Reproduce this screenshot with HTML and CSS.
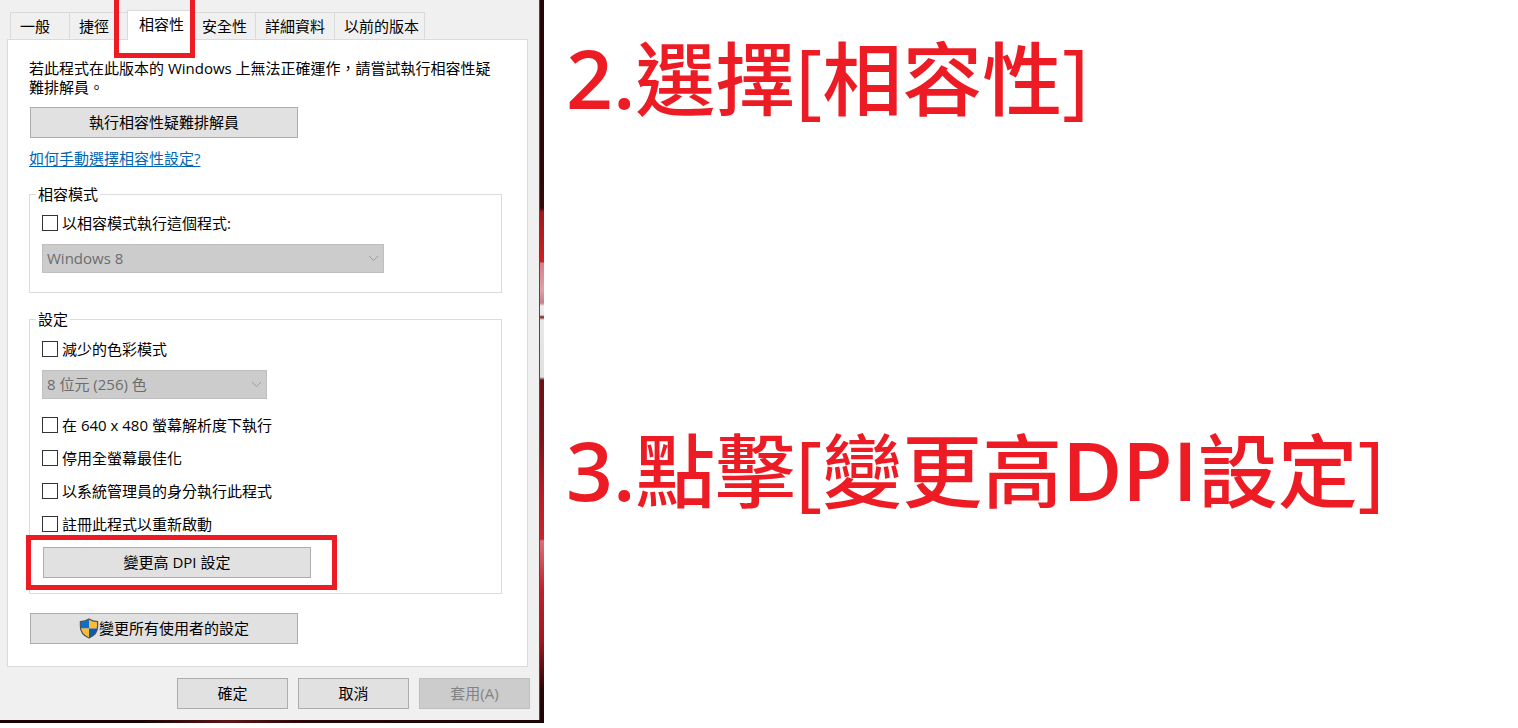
FILE: index.html
```html
<!DOCTYPE html>
<html lang="zh-Hant">
	<head>
		<meta charset="UTF-8">
		<title>相容性</title>
		<link rel="stylesheet" href="styles.css">
	</head>
	<body>
		<div class="wrap">
			<div class="desktop">
				<form class="dialog">
					<div class="tabs" role="tablist">
						<button type="button" role="tab" class="tab">一般</button>
						<button type="button" role="tab" class="tab tab-link">捷徑</button>
						<button type="button" role="tab" class="tab active" aria-selected="true">相容性</button>
						<button type="button" role="tab" class="tab tab-safe">安全性</button>
						<button type="button" role="tab" class="tab">詳細資料</button>
						<button type="button" role="tab" class="tab">以前的版本</button>
					</div>
					<div class="panel">
						<p class="intro">若此程式在此版本的 Windows 上無法正確運作，請嘗試執行相容性疑難排解員。</p>
						<button type="button" class="btn wide">執行相容性疑難排解員</button>
						<a class="help" href="#">如何手動選擇相容性設定?</a>

						<fieldset class="mode">
							<legend>相容模式</legend>
							<label class="check"><input type="checkbox">以相容模式執行這個程式:</label>
							<div class="select os">
								<select disabled aria-label="相容模式"><option>Windows 8</option></select>
								<svg viewBox="0 0 11 7"><path d="M1 1l4.500 4.500L10 1"/></svg>
							</div>
						</fieldset>

						<fieldset class="settings">
							<legend>設定</legend>
							<label class="check"><input type="checkbox">減少的色彩模式</label>
							<div class="select color">
								<select disabled aria-label="色彩模式"><option>8 位元 (256) 色</option></select>
								<svg viewBox="0 0 11 7"><path d="M1 1l4.500 4.500L10 1"/></svg>
							</div>
							<div class="checks">
								<label class="check"><input type="checkbox">在 640 x 480 螢幕解析度下執行</label>
								<label class="check"><input type="checkbox">停用全螢幕最佳化</label>
								<label class="check"><input type="checkbox">以系統管理員的身分執行此程式</label>
								<label class="check"><input type="checkbox">註冊此程式以重新啟動</label>
								<div class="dpi">
									<button type="button" class="btn wide">變更高 DPI 設定</button>
								</div>
							</div>
						</fieldset>

						<button type="button" class="btn wide all-users">
							<svg class="shield" viewBox="0 0 20 22">
								<path fill="#0f6fc6" d="M10 1C7.500 2.800 4.500 3.600 1 3.700V11h9z"/>
								<path fill="#fdbb35" d="M10 1c2.500 1.800 5.500 2.600 9 2.700V11h-9z"/>
								<path fill="#fdbb35" d="M1 11c.5 4.500 4 7.800 9 10V11z"/>
								<path fill="#0d5cab" d="M19 11c-.5 4.500-4 7.800-9 10V11z"/>
								<path fill="none" stroke="#4b5560" stroke-width="1.300" d="M10 1C7.500 2.800 4.500 3.600 1 3.700V9c0 6 3.500 9.800 9 12 5.500-2.200 9-6 9-12V3.700C15.500 3.600 12.500 2.800 10 1z"/>
							</svg>變更所有使用者的設定
						</button>
					</div>
					<div class="footer">
						<button type="button" class="btn">確定</button>
						<button type="button" class="btn">取消</button>
						<button type="button" class="btn" disabled>套用(A)</button>
					</div>
				</form>
			</div>

			<div class="steps">
				<h2><b>2.</b>選擇<span>[</span>相容性<span>]</span></h2>
				<h2><b>3.</b>點擊<span>[</span>變更高<b>DPI</b>設定<span>]</span></h2>
			</div>
		</div>
	</body>
</html>
```
FILE: styles.css
```css
*{
	box-sizing: border-box;
}
body{
	margin: 0;
	background: #fff;
	color: #000;
	font: 15px/19px "Open Sans","Noto Sans CJK TC",sans-serif;
}
button,select,input{
	font: inherit;
	color: inherit;
	margin: 0;
}
.wrap{
	display: flex;
	align-items: flex-start;
}

/* wallpaper shows on the right and bottom edge of the dialog */
.desktop{
	flex: 0 1 544px;
	padding: 0 4px 3px 0;
	background:
		linear-gradient(to right,#1c0405 0%,#1c0405 26%,#5c1518 42%,#2a0607 56%,#1c0405 100%) left bottom/100% 3px no-repeat,
		linear-gradient(#260405 0,#300506 180px,#3a080a 208px,#a0181c 212px,#d0201f 262px,#d97f88 263px,#dfa0a6 290px,#c9808a 303px,#f0eeee 306px,#e8e6e6 315px,#7a1418 317px,#e8e8e8 320px,#dfe2df 377px,#6a1014 380px,#7d1418 440px,#b81c22 490px,#c8242a 539px,#dc7078 541px,#c02028 590px,#a0181e 640px,#2a0506 690px,#1c0405 723px);
}
.dialog{
	padding: 10px 0 11px 7px;
	background: #f0f0f0;
	border-right: 1px solid #5a4648;
}

/* tabs */
.tabs{
	display: flex;
	align-items: flex-end;
	padding-left: 3px;
}
.tab{
	height: 27px;
	padding: 0 9px;
	border: 1px solid #dadada;
	border-bottom: 0;
	border-right: 0;
	background: #f0f0f0;
	white-space: nowrap;
}
.tab:first-child{
	padding-right: 19px;
}
.tab:last-child{
	padding-right: 5px;
	border-right: 1px solid #dadada;
}
.tab-link{
	padding-right: 18px;
}
.tab-safe{
	padding: 0 8px 0 7px;
	border-left: 0;
}
.tab.active{
	position: relative;
	height: 30px;
	margin-bottom: -1px;
	padding: 0 11px 2px;
	background: #fff;
}
.tab.active::after{
	content: "";
	position: absolute;
	top: -11px;
	left: -14px;
	right: 0;
	height: 53px;
	border: 5px solid #ed1c24;
	border-top: 0;
	z-index: 2;
}

.panel{
	margin-right: 11px;
	padding: 19px 25px 22px 21px;
	border: 1px solid #dadada;
	background: #fff;
}
.intro{
	margin: 0 0 10px;
}
.help{
	display: table;
	margin: 11px 0 17px;
	color: #0066b4;
	text-underline-offset: 2px;
}

/* buttons */
.btn{
	width: 111px;
	height: 31px;
	padding: 0;
	border: 1px solid #adadad;
	background: #e1e1e1;
}
.btn.wide{
	width: 268px;
	max-width: 100%;
	margin-left: 1px;
}
.btn:disabled{
	border-color: #bfbfbf;
	background: #ccc;
	color: #838383;
}
.all-users{
	display: flex;
	align-items: center;
	justify-content: center;
	margin-top: 19px;
}
.shield{
	width: 20px;
	height: 21px;
}

/* groups */
fieldset{
	min-width: 0;
	margin: 0;
	padding: 9px 12px 19px;
	border: 1px solid #dcdcdc;
}
legend{
	margin-left: -6px;
	padding: 0 2px;
}
.settings{
	margin-top: 17px;
	padding: 10px 12px 15px;
}
.check{
	display: flex;
	align-items: center;
	gap: 4px;
	height: 20px;
	line-height: 18px;
}
.check input{
	appearance: none;
	width: 16px;
	height: 16px;
	border: 1px solid #333;
	background: #fff;
}
.select{
	position: relative;
	margin-top: 11px;
	color: #6d6d6d;
}
.select select{
	appearance: none;
	display: block;
	width: 100%;
	height: 29px;
	padding: 0 24px 0 4px;
	border: 1px solid #bfbfbf;
	border-radius: 0;
	background: #ccc;
	opacity: 1;
}
.select svg{
	position: absolute;
	right: 5px;
	top: 11px;
	width: 11px;
	height: 7px;
	fill: none;
	stroke: #9c9c9c;
}
.os{
	max-width: 342px;
}
.color{
	max-width: 225px;
}
.checks{
	display: flex;
	flex-direction: column;
	gap: 13px;
	margin-top: 16px;
}
.dpi{
	position: relative;
	align-self: flex-start;
}
.dpi .btn{
	display: block;
}
.dpi::after{
	content: "";
	position: absolute;
	inset: -12px -26px -12px -16px;
	border: 5px solid #ed1c24;
	pointer-events: none;
}
.footer{
	display: flex;
	justify-content: flex-end;
	gap: 10px;
	padding: 11px 9px 0 0;
}

/* red captions */
.steps{
	flex: 1;
	padding: 28px 0 0 22px;
	color: #ed1c24;
}
.steps h2{
	margin: 0 0 292px;
	font-size: 80px;
	font-weight: 500;
	line-height: 100px;
	white-space: nowrap;
}
.steps h2:last-child{
	margin-bottom: 0;
}
.steps b,.steps span{
	font-size: 82px;
	line-height: 80px;
}
.steps b{
	font-weight: 600;
}
```
